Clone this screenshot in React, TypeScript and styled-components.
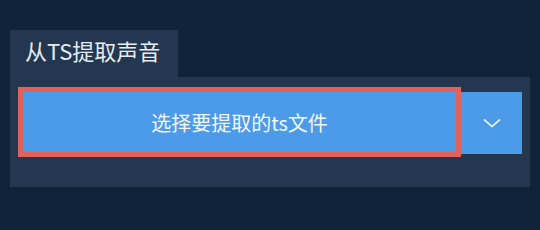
import React from 'react';
import styled, { createGlobalStyle } from 'styled-components';

const GlobalStyle = createGlobalStyle`
  html, body {
    margin: 0;
    padding: 0;
    background: #10233a;
  }
  body {
    font-family: "Noto Sans CJK SC", "Noto Sans", sans-serif;
  }
`;

const Page = styled.div`
  width: 540px;
  height: 230px;
  padding: 30px 10px 0;
  box-sizing: border-box;
`;

const Tab = styled.div`
  display: inline-block;
  width: 168px;
  height: 47px;
  box-sizing: border-box;
  padding: 3px 0 0 15px;
  background: #233750;
  color: #e6ecf2;
  font-size: 22px;
  line-height: 34px;
  vertical-align: top;
`;

const Panel = styled.div`
  width: 520px;
  height: 110px;
  box-sizing: border-box;
  padding: 15px 8px 0 13px;
  background: #233750;
`;

const ButtonRow = styled.div`
  display: flex;
  align-items: flex-start;
  gap: 5px;
`;

const MainButton = styled.button`
  width: 433px;
  height: 60px;
  border: none;
  padding: 0;
  background: #4c9be8;
  color: #f2f6fa;
  font-family: inherit;
  font-size: 20px;
  outline: 5px solid #e0625c;
  cursor: pointer;
`;

const DropButton = styled.button`
  width: 61px;
  height: 62px;
  border: none;
  padding: 0;
  background: #4c9be8;
  display: flex;
  align-items: center;
  justify-content: center;
  cursor: pointer;
`;

const App: React.FC = () => {
  return (
    <>
      <GlobalStyle />
      <Page>
        <Tab>从TS提取声音</Tab>
        <Panel>
          <ButtonRow>
            <MainButton>选择要提取的ts文件</MainButton>
            <DropButton>
              <svg width="18" height="10" viewBox="0 0 18 10">
                <path d="M1 1.5 L9 8.5 L17 1.5" fill="none" stroke="#ffffff" strokeWidth="1.6" />
              </svg>
            </DropButton>
          </ButtonRow>
        </Panel>
      </Page>
    </>
  );
};

export default App;
